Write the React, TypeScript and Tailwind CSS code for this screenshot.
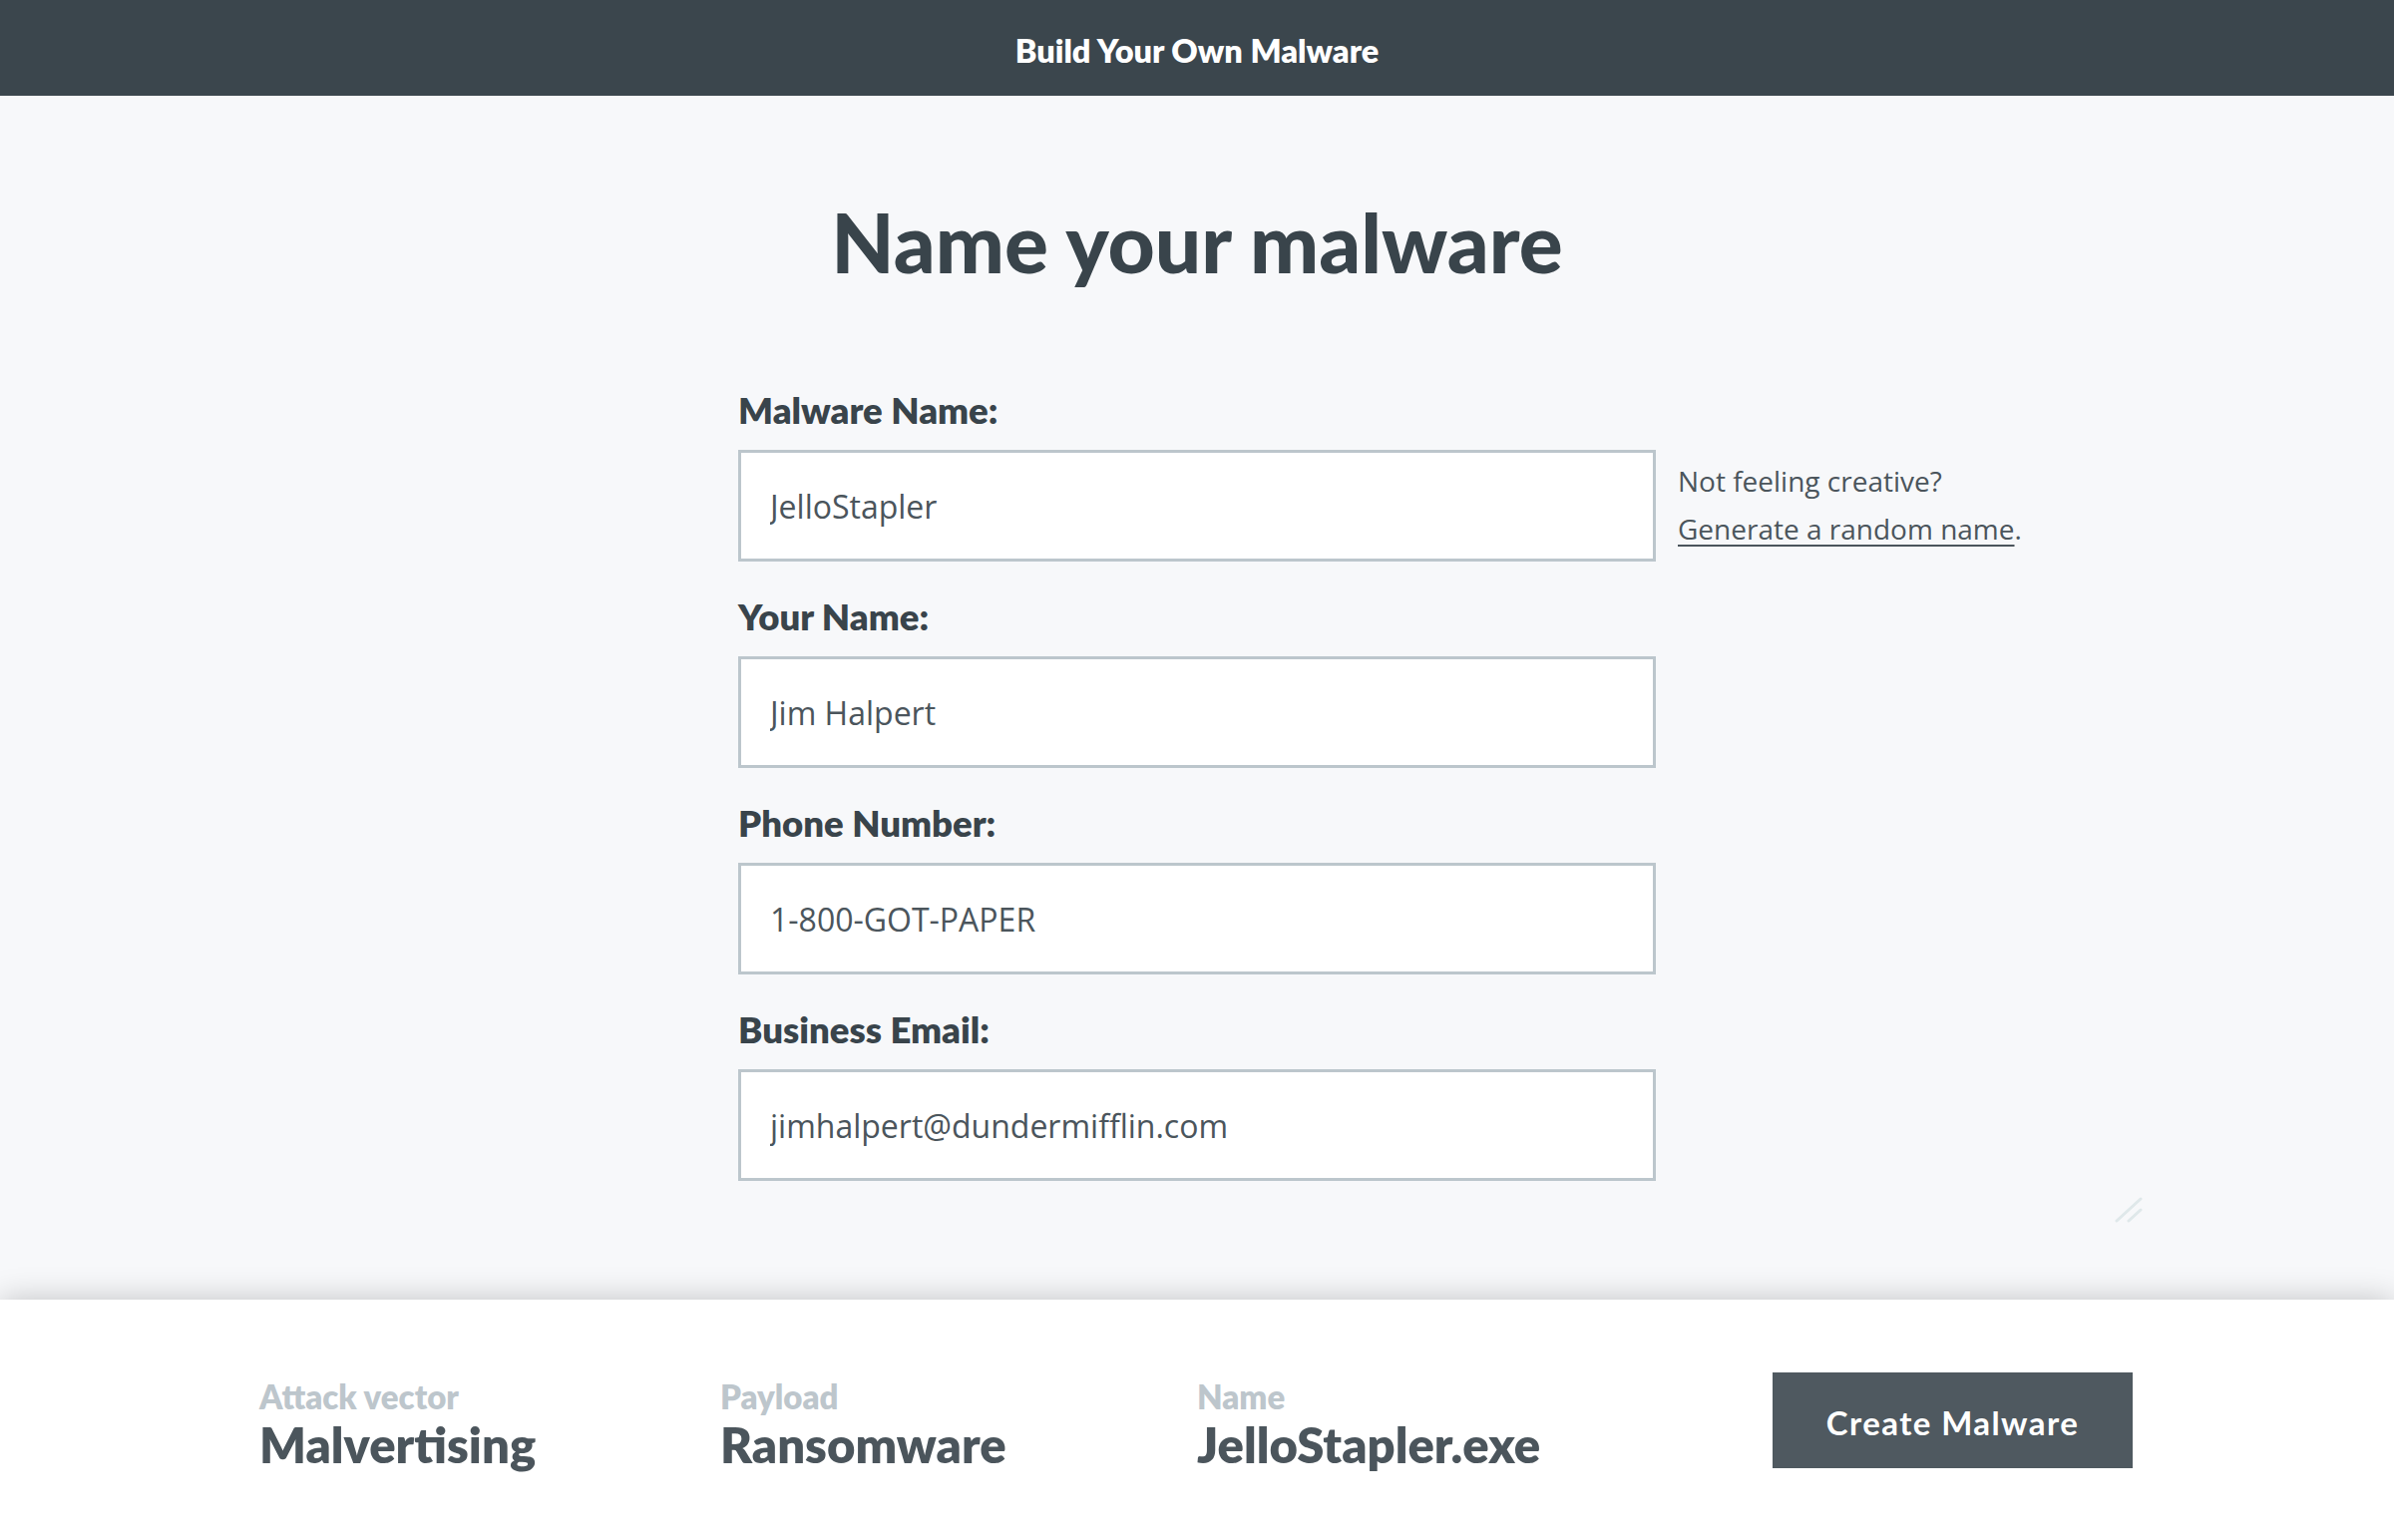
const FIELDS = [
  { label: "Malware Name:", value: "JelloStapler", hint: true },
  { label: "Your Name:", value: "Jim Halpert", hint: false },
  { label: "Phone Number:", value: "1-800-GOT-PAPER", hint: false },
  { label: "Business Email:", value: "jimhalpert@dundermifflin.com", hint: false },
];

const SUMMARY = [
  { label: "Attack vector", value: "Malvertising", width: "w-[462px]" },
  { label: "Payload", value: "Ransomware", width: "w-[478px]" },
  { label: "Name", value: "JelloStapler.exe", width: "w-[577px]" },
];

const lato = "font-['Lato','Liberation_Sans',sans-serif]";
const openSans = "font-['Open_Sans','Liberation_Sans',sans-serif]";

function Field({ label, value, hint }: { label: string; value: string; hint: boolean }) {
  return (
    <div className="grid grid-cols-[1fr_920px_1fr] mt-[33px] first:mt-0">
      <div />
      <div>
        <label className={`block ${lato} font-extrabold text-[36.5px] leading-[44px] text-[#39444b] mb-[18px]`}>
          {label}
        </label>
        <input
          defaultValue={value}
          className={`block w-full h-[112px] bg-white border-[3px] border-[#bcc6cc] px-[29px] ${openSans} text-[32px] text-[#4b555c] outline-none`}
        />
      </div>
      <div className="pl-[22px] pt-[69px]">
        {hint && (
          <div className={`${openSans} text-[28px] leading-[48px] text-[#4b555c]`}>
            <div>Not feeling creative?</div>
            <div>
              <a href="#" className="underline decoration-2 underline-offset-[5px]">
                Generate a random name
              </a>
              .
            </div>
          </div>
        )}
      </div>
    </div>
  );
}

export default function App() {
  return (
    <div className="min-h-screen flex flex-col bg-[#f7f8fa]">
      <header className="h-[96px] bg-[#3b464d] flex items-center justify-center pt-[6px]">
        <span className={`${lato} font-extrabold text-[32.5px] text-white`}>Build Your Own Malware</span>
      </header>

      <main className="flex-1 flex flex-col">
        <h1 className={`${lato} font-black text-[82px] leading-[84px] text-[#39444b] text-center mt-[104px] mb-[72px]`}>
          Name your malware
        </h1>

        {FIELDS.map((f) => (
          <Field key={f.label} {...f} />
        ))}

        {/* resize grip */}
        <div className="flex justify-end pr-[252px] mt-[16px]">
          <svg width="28" height="26" viewBox="0 0 28 26">
            <path d="M2 24 L26 2 M14 24 L26 13" stroke="#dfe8ea" strokeWidth="3" strokeLinecap="round" />
          </svg>
        </div>
      </main>

      <footer className="relative z-10 h-[241px] bg-white shadow-[0_0_30px_rgba(0,0,0,0.22)] flex items-center px-[260px]">
        {SUMMARY.map((s) => (
          <div key={s.label} className={`${s.width} mt-[10px] ${lato} font-extrabold`}>
            <div className="text-[33px] leading-[36px] text-[#bdc6cc]">{s.label}</div>
            <div className="text-[49px] leading-[56px] text-[#4b555c] mt-[2px]">{s.value}</div>
          </div>
        ))}
        <button className={`w-[361px] h-[96px] bg-[#4f5960] text-white pt-[6px] ${lato} font-bold text-[33px] tracking-[1.4px]`}>
          Create Malware
        </button>
      </footer>
    </div>
  );
}
